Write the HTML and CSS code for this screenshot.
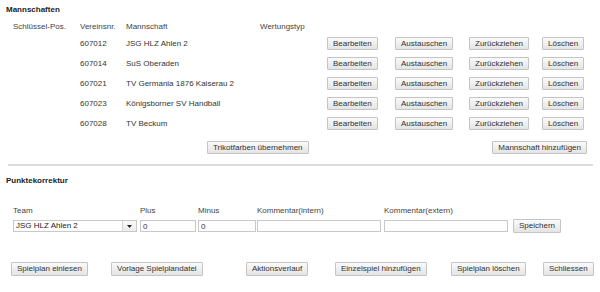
FILE: index.html
```html
<!DOCTYPE html>
<html lang="de">
<head>
    <meta charset="UTF-8">
    <title>Mannschaften</title>
    <link rel="stylesheet" href="styles.css">
</head>
<body>
    <div class="page">
        <h2 class="section-title">Mannschaften</h2>

        <div class="team-grid">
            <div class="head first">Schlüssel-Pos.</div>
            <div class="head">Vereinsnr.</div>
            <div class="head">Mannschaft</div>
            <div class="head">Wertungstyp</div>
            <div></div><div></div><div></div><div></div>

            <div></div>
            <div>607012</div>
            <div>JSG HLZ Ahlen 2</div>
            <div></div>
            <div><button class="btn">Bearbeiten</button></div>
            <div><button class="btn">Austauschen</button></div>
            <div><button class="btn">Zurückziehen</button></div>
            <div><button class="btn">Löschen</button></div>

            <div></div>
            <div>607014</div>
            <div>SuS Oberaden</div>
            <div></div>
            <div><button class="btn">Bearbeiten</button></div>
            <div><button class="btn">Austauschen</button></div>
            <div><button class="btn">Zurückziehen</button></div>
            <div><button class="btn">Löschen</button></div>

            <div></div>
            <div>607021</div>
            <div>TV Germania 1876 Kaiserau 2</div>
            <div></div>
            <div><button class="btn">Bearbeiten</button></div>
            <div><button class="btn">Austauschen</button></div>
            <div><button class="btn">Zurückziehen</button></div>
            <div><button class="btn">Löschen</button></div>

            <div></div>
            <div>607023</div>
            <div>Königsborner SV Handball</div>
            <div></div>
            <div><button class="btn">Bearbeiten</button></div>
            <div><button class="btn">Austauschen</button></div>
            <div><button class="btn">Zurückziehen</button></div>
            <div><button class="btn">Löschen</button></div>

            <div></div>
            <div>607028</div>
            <div>TV Beckum</div>
            <div></div>
            <div><button class="btn">Bearbeiten</button></div>
            <div><button class="btn">Austauschen</button></div>
            <div><button class="btn">Zurückziehen</button></div>
            <div><button class="btn">Löschen</button></div>
        </div>

        <div class="team-actions">
            <button class="btn">Trikotfarben übernehmen</button>
            <button class="btn">Mannschaft hinzufügen</button>
        </div>

        <hr class="divider">

        <h2 class="section-title second">Punktekorrektur</h2>

        <div class="points-grid">
            <div class="label">Team</div>
            <div class="label">Plus</div>
            <div class="label">Minus</div>
            <div class="label">Kommentar(intern)</div>
            <div class="label">Kommentar(extern)</div>
            <div></div>

            <div class="select">
                <span class="select-value">JSG HLZ Ahlen 2</span>
                <span class="select-arrow">
                    <svg width="5" height="3" viewBox="0 0 5 3"><path d="M0 0H5L2.5 3Z" fill="#222"/></svg>
                </span>
            </div>
            <div><input class="field plus" type="text" value="0"></div>
            <div><input class="field minus" type="text" value="0"></div>
            <div><input class="field comment" type="text"></div>
            <div><input class="field comment" type="text"></div>
            <div><button class="btn save">Speichern</button></div>
        </div>

        <div class="bottom-actions">
            <div><button class="btn tall">Spielplan einlesen</button></div>
            <div><button class="btn tall">Vorlage Spielplandatei</button></div>
            <div><button class="btn tall">Aktionsverlauf</button></div>
            <div><button class="btn tall">Einzelspiel hinzufügen</button></div>
            <div><button class="btn tall">Spielplan löschen</button></div>
            <div><button class="btn tall">Schliessen</button></div>
        </div>
    </div>
</body>
</html>
```

FILE: styles.css
```css
body {
    margin: 0;
    background-color: #fff;
    font-family: "Liberation Sans", Arial, sans-serif;
    font-size: 8px;
    color: #333;
}
.page {
    padding: 4px 7px 0 6px;
}
.section-title {
    margin: 0;
    font-size: 8px;
    line-height: 12px;
    font-weight: bold;
    color: #222;
}
.section-title.second {
    margin-top: 9px;
}
.team-grid {
    display: grid;
    grid-template-columns: 74px 46px 134px 67px 68px 74px 73px auto;
    grid-template-rows: 13px repeat(5, 20px);
    align-items: center;
    margin-top: 4px;
}
.head {
    color: #444;
}
.head.first {
    padding-left: 7px;
}
.btn {
    display: inline-block;
    height: 13px;
    padding: 0 5px;
    margin: 0;
    font-family: "Liberation Sans", Arial, sans-serif;
    font-size: 8px;
    line-height: 11px;
    color: #333;
    background: linear-gradient(#fafafa, #e4e4e4);
    border: 1px solid #c4c4c4;
    border-radius: 1px;
    vertical-align: middle;
}
.btn.tall, .btn.save {
    height: 14px;
    line-height: 12px;
}
.team-actions {
    display: flex;
    justify-content: space-between;
    margin-top: 8px;
    padding-left: 201px;
    padding-right: 6px;
}
.divider {
    margin: 10px 0 0 2px;
    border: 0;
    border-top: 2px solid #dcdcdc;
    height: 0;
}
.points-grid {
    display: grid;
    grid-template-columns: 127px 58px 59px 127px 129px auto;
    grid-template-rows: 12px 14px;
    row-gap: 3px;
    align-items: center;
    margin-top: 17px;
    padding-left: 7px;
}
.label {
    color: #444;
}
.field {
    display: block;
    box-sizing: border-box;
    height: 12px;
    margin: 0;
    padding: 0 2px;
    font-family: "Liberation Sans", Arial, sans-serif;
    font-size: 8px;
    color: #333;
    border: 1px solid #c8c8c8;
    background-color: #fff;
}
.field.plus {
    width: 56px;
}
.field.minus {
    width: 58px;
}
.field.comment {
    width: 124px;
}
.select {
    display: flex;
    box-sizing: border-box;
    width: 124px;
    height: 12px;
    border: 1px solid #c8c8c8;
    background-color: #fff;
}
.select-value {
    flex: 1;
    padding-left: 2px;
    line-height: 10px;
    color: #222;
}
.select-arrow {
    display: flex;
    align-items: center;
    justify-content: center;
    width: 13px;
    border-left: 1px solid #d4d4d4;
    background: linear-gradient(#fafafa, #ececec);
}
.btn.save {
    margin-left: 0;
}
.bottom-actions {
    display: grid;
    grid-template-columns: 100px 135px 89px 116px 92px auto;
    margin-top: 29px;
    padding-left: 5px;
}
```
